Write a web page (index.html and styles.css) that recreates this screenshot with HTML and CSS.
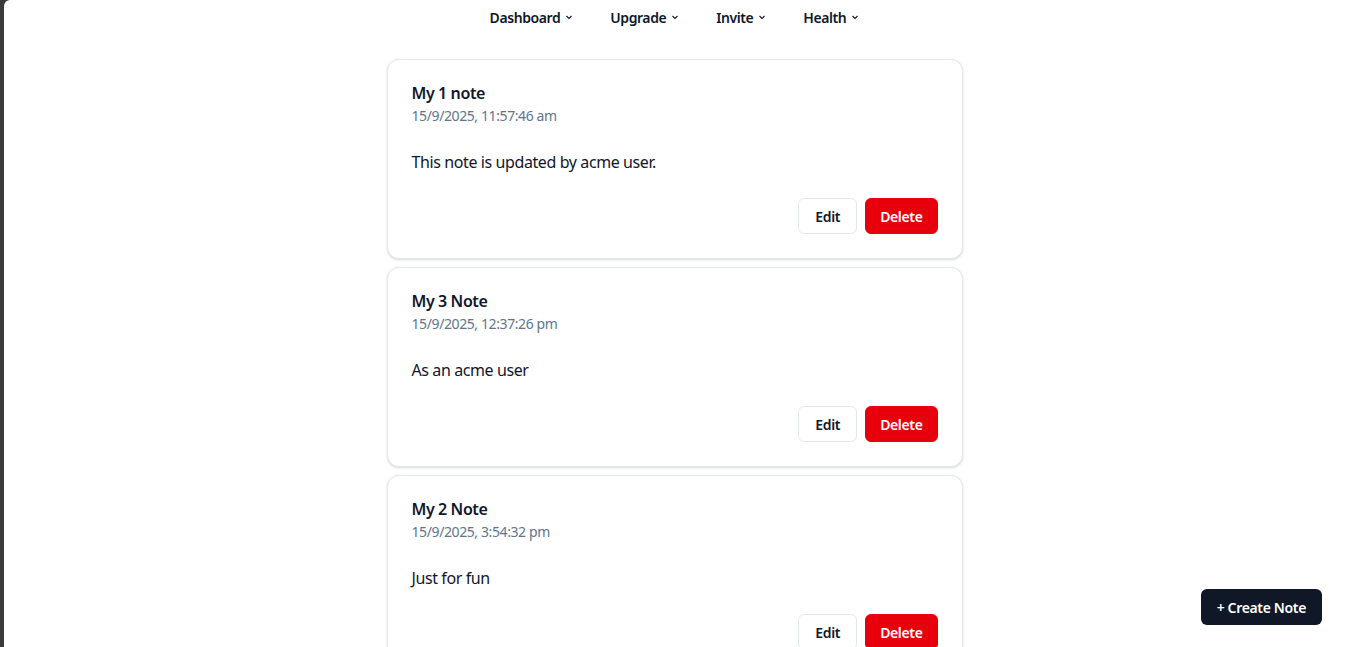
FILE: index.html
```html
<!DOCTYPE html>
<html lang="en">
<head>
<meta charset="utf-8">
<title>Notes</title>
<link rel="stylesheet" href="styles.css">
</head>
<body>
<div class="frame">
  <nav class="topnav">
    <div class="nav-item">Dashboard <svg class="chev" viewBox="0 0 8 8"><path d="M1.5 3l2.5 2.5L6.5 3"/></svg></div>
    <div class="nav-item">Upgrade <svg class="chev" viewBox="0 0 8 8"><path d="M1.5 3l2.5 2.5L6.5 3"/></svg></div>
    <div class="nav-item">Invite <svg class="chev" viewBox="0 0 8 8"><path d="M1.5 3l2.5 2.5L6.5 3"/></svg></div>
    <div class="nav-item">Health <svg class="chev" viewBox="0 0 8 8"><path d="M1.5 3l2.5 2.5L6.5 3"/></svg></div>
  </nav>
  <main class="notes">
    <article class="card">
      <h2 class="title">My 1 note</h2>
      <div class="date">15/9/2025, 11:57:46 am</div>
      <p class="body">This note is updated by acme user.</p>
      <div class="actions"><button class="btn btn-edit">Edit</button><button class="btn btn-delete">Delete</button></div>
    </article>
    <article class="card">
      <h2 class="title">My 3 Note</h2>
      <div class="date">15/9/2025, 12:37:26 pm</div>
      <p class="body">As an acme user</p>
      <div class="actions"><button class="btn btn-edit">Edit</button><button class="btn btn-delete">Delete</button></div>
    </article>
    <article class="card">
      <h2 class="title">My 2 Note</h2>
      <div class="date">15/9/2025, 3:54:32 pm</div>
      <p class="body">Just for fun</p>
      <div class="actions"><button class="btn btn-edit">Edit</button><button class="btn btn-delete">Delete</button></div>
    </article>
  </main>
  <button class="fab">+ Create Note</button>
</div>
</body>
</html>
```
FILE: styles.css
```css
html, body { margin: 0; padding: 0; }
body {
  background: #3a3a3a;
  font-family: "Noto Sans", "Open Sans", sans-serif;
  color: #0f172a;
  letter-spacing: -0.025em;
}
.frame {
  margin-left: 4px;
  background: #fff;
  min-height: 100vh;
  border-top-left-radius: 6px;
  border-bottom-left-radius: 6px;
}
.topnav {
  display: flex;
  justify-content: center;
  gap: 37px;
  height: 34px;
  align-items: center;
}
.nav-item {
  font-size: 14px;
  font-weight: 600;
  display: flex;
  align-items: center;
  gap: 5px;
  color: #0f172a;
  letter-spacing: -0.03em;
}
.chev { width: 8px; height: 8px; fill: none; stroke: #0f172a; stroke-width: 1.1; }
.notes {
  width: 576px;
  margin: 25px auto 0;
  display: flex;
  flex-direction: column;
  gap: 8px;
}
.card {
  border: 1px solid #e2e8f0;
  border-radius: 12px;
  padding: 22px 24px 24px;
  box-shadow: 0 1px 3px rgba(15, 23, 42, 0.1), 0 1px 2px rgba(15, 23, 42, 0.06);
  background: #fff;
}
.title { margin: 0 0 2px; font-size: 16px; font-weight: 600; line-height: 22px; }
.date { font-size: 14px; line-height: 20px; color: #62748e; }
.body { margin: 24px 0 0; font-size: 16px; line-height: 24px; }
.actions { display: flex; justify-content: flex-end; gap: 8px; margin-top: 24px; }
.btn {
  font-family: inherit;
  letter-spacing: -0.025em;
  font-size: 14px;
  font-weight: 600;
  height: 36px;
  border-radius: 6px;
  padding: 0 16px;
  cursor: pointer;
}
.btn-edit { background: #fff; border: 1px solid #e2e8f0; color: #0f172a; }
.btn-delete { background: #e7000b; border: 1px solid #e7000b; color: #fff; padding: 0 14px; }
.fab {
  position: fixed;
  right: 23px;
  bottom: 22px;
  height: 36px;
  padding: 0 16px;
  background: #101828;
  color: #fff;
  border: none;
  border-radius: 6px;
  font-family: inherit;
  letter-spacing: -0.025em;
  font-size: 14px;
  font-weight: 600;
}
```
